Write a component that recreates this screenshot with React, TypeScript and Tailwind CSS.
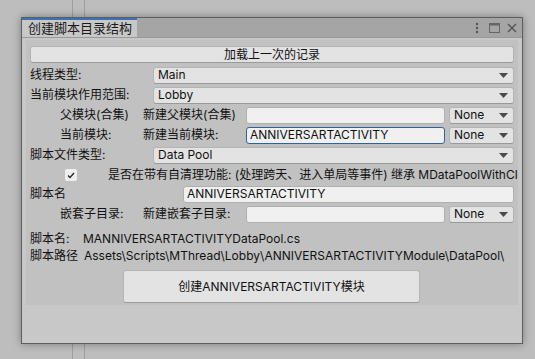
import React from 'react';

const font = { fontFamily: '"Inter", "Noto Sans CJK SC", sans-serif' };

function Arrow() {
  return (
    <svg width="9" height="5" viewBox="0 0 9 5" className="shrink-0">
      <path d="M0 0 H9 L4.5 5 Z" fill="#4a4a4a" />
    </svg>
  );
}

function Dropdown({ value, className = '' }: { value: string; className?: string }) {
  return (
    <div className={`h-[17px] flex items-center justify-between pl-[4px] pr-[5px] bg-[#e3e3e3] border border-[#b4b4b4] border-b-[#999] rounded-[3px] ${className}`}>
      <span>{value}</span>
      <Arrow />
    </div>
  );
}

function Field({ value = '', focused = false, className = '' }: { value?: string; focused?: boolean; className?: string }) {
  return (
    <div className={`h-[17px] flex items-center pl-[3px] bg-[#f0f0f0] border rounded-[3px] ${focused ? 'border-[#2e63a0]' : 'border-[#b0b0b0]'} ${className}`}>
      {value}
    </div>
  );
}

function SubRow({ label, sub, value, focused }: { label: string; sub: string; value?: string; focused?: boolean }) {
  return (
    <div className="h-[18px] mt-[2px] flex items-center">
      <span className="w-[113px] pl-[30px] shrink-0">{label}</span>
      <span className="w-[103px] shrink-0">{sub}</span>
      <Field value={value} focused={focused} className="w-[199px]" />
      <Dropdown value="None" className="w-[65px] ml-[4px]" />
    </div>
  );
}

export default function App() {
  return (
    <div className="relative w-[535px] h-[359px] overflow-hidden bg-[#bdbdbd] text-[12px] text-[#111]" style={font}>
      {/* background editor lines */}
      <div className="absolute left-[72px] top-0 h-full w-px bg-[#9e9e9e]" />
      <div className="absolute left-[84px] top-0 h-full w-px bg-[#9e9e9e]" />

      <div className="relative ml-[21px] mt-[17px] w-[502px] h-[327px] border border-[#5e5e5e] bg-[#c8c8c8] shadow-[0_0_8px_rgba(0,0,0,0.35)] flex flex-col">
        {/* tab bar */}
        <div className="h-[20px] bg-[#a5a5a5] border-b border-[#999] flex items-stretch justify-between shrink-0">
          <div className="w-[115px] bg-[#c8c8c8] border-t-2 border-[#3a72b4] pl-[6px] flex items-center text-[13px] text-[#1a1a1a]">
            创建脚本目录结构
          </div>
          <div className="flex items-center pr-[5px]">
            <svg width="4" height="12" viewBox="0 0 4 12">
              <circle cx="2" cy="2" r="1.2" fill="#555" />
              <circle cx="2" cy="6" r="1.2" fill="#555" />
              <circle cx="2" cy="10" r="1.2" fill="#555" />
            </svg>
            <svg width="11" height="10" viewBox="0 0 11 10" className="ml-[10px]">
              <rect x="0.5" y="0.5" width="10" height="9" fill="none" stroke="#666" />
              <rect x="0.5" y="0.5" width="10" height="2" fill="#666" />
            </svg>
            <svg width="10" height="10" viewBox="0 0 10 10" className="ml-[7px]">
              <path d="M1 1 L9 9 M9 1 L1 9" stroke="#555" strokeWidth="1.4" />
            </svg>
          </div>
        </div>

        {/* content panel */}
        <div className="mx-[4px] mt-[2px] h-[265px] bg-[#c1c1c1] px-[4px] pt-[6px] overflow-hidden whitespace-nowrap">
          <div className="h-[17px] flex items-center justify-center bg-[#e3e3e3] border border-[#b4b4b4] border-b-[#999] rounded-[3px]">
            加载上一次的记录
          </div>

          <div className="h-[18px] mt-[3px] flex items-center">
            <span className="w-[123px] shrink-0">线程类型:</span>
            <Dropdown value="Main" className="flex-1" />
          </div>
          <div className="h-[18px] mt-[2px] flex items-center">
            <span className="w-[123px] shrink-0">当前模块作用范围:</span>
            <Dropdown value="Lobby" className="flex-1" />
          </div>

          <SubRow label="父模块(合集)" sub="新建父模块(合集)" />
          <SubRow label="当前模块:" sub="新建当前模块:" value="ANNIVERSARTACTIVITY" focused />

          <div className="h-[18px] mt-[2px] flex items-center">
            <span className="w-[123px] shrink-0">脚本文件类型:</span>
            <Dropdown value="Data Pool" className="flex-1" />
          </div>

          <div className="h-[18px] mt-[2px] flex items-center">
            <div className="ml-[35px] w-[12px] h-[12px] bg-[#efefef] rounded-[2px] flex items-center justify-center shrink-0">
              <svg width="8" height="7" viewBox="0 0 8 7">
                <path d="M1 3.5 L3 5.5 L7 1" fill="none" stroke="#222" strokeWidth="1.3" />
              </svg>
            </div>
            <span className="ml-[31px]">是否在带有自清理功能: (处理跨天、进入单局等事件) 继承 MDataPoolWithClean</span>
          </div>

          <div className="h-[18px] mt-[1px] flex items-center">
            <span className="w-[153px] shrink-0">脚本名</span>
            <Field value="ANNIVERSARTACTIVITY" className="flex-1 h-[16px]" />
          </div>

          <SubRow label="嵌套子目录:" sub="新建嵌套子目录:" />

          <div className="mt-[7px] h-[17px] flex items-center">
            <span className="w-[53px] shrink-0">脚本名:</span>
            <span>MANNIVERSARTACTIVITYDataPool.cs</span>
          </div>
          <div className="h-[17px] flex items-center">
            <span className="w-[54px] shrink-0">脚本路径</span>
            <span>Assets\Scripts\MThread\Lobby\ANNIVERSARTACTIVITYModule\DataPool\</span>
          </div>

          <div className="mt-[6px] ml-[93px] w-[297px] h-[33px] flex items-center justify-center bg-[#e3e3e3] border border-[#b4b4b4] border-b-[#999] rounded-[3px]">
            创建ANNIVERSARTACTIVITY模块
          </div>
        </div>
      </div>
    </div>
  );
}
